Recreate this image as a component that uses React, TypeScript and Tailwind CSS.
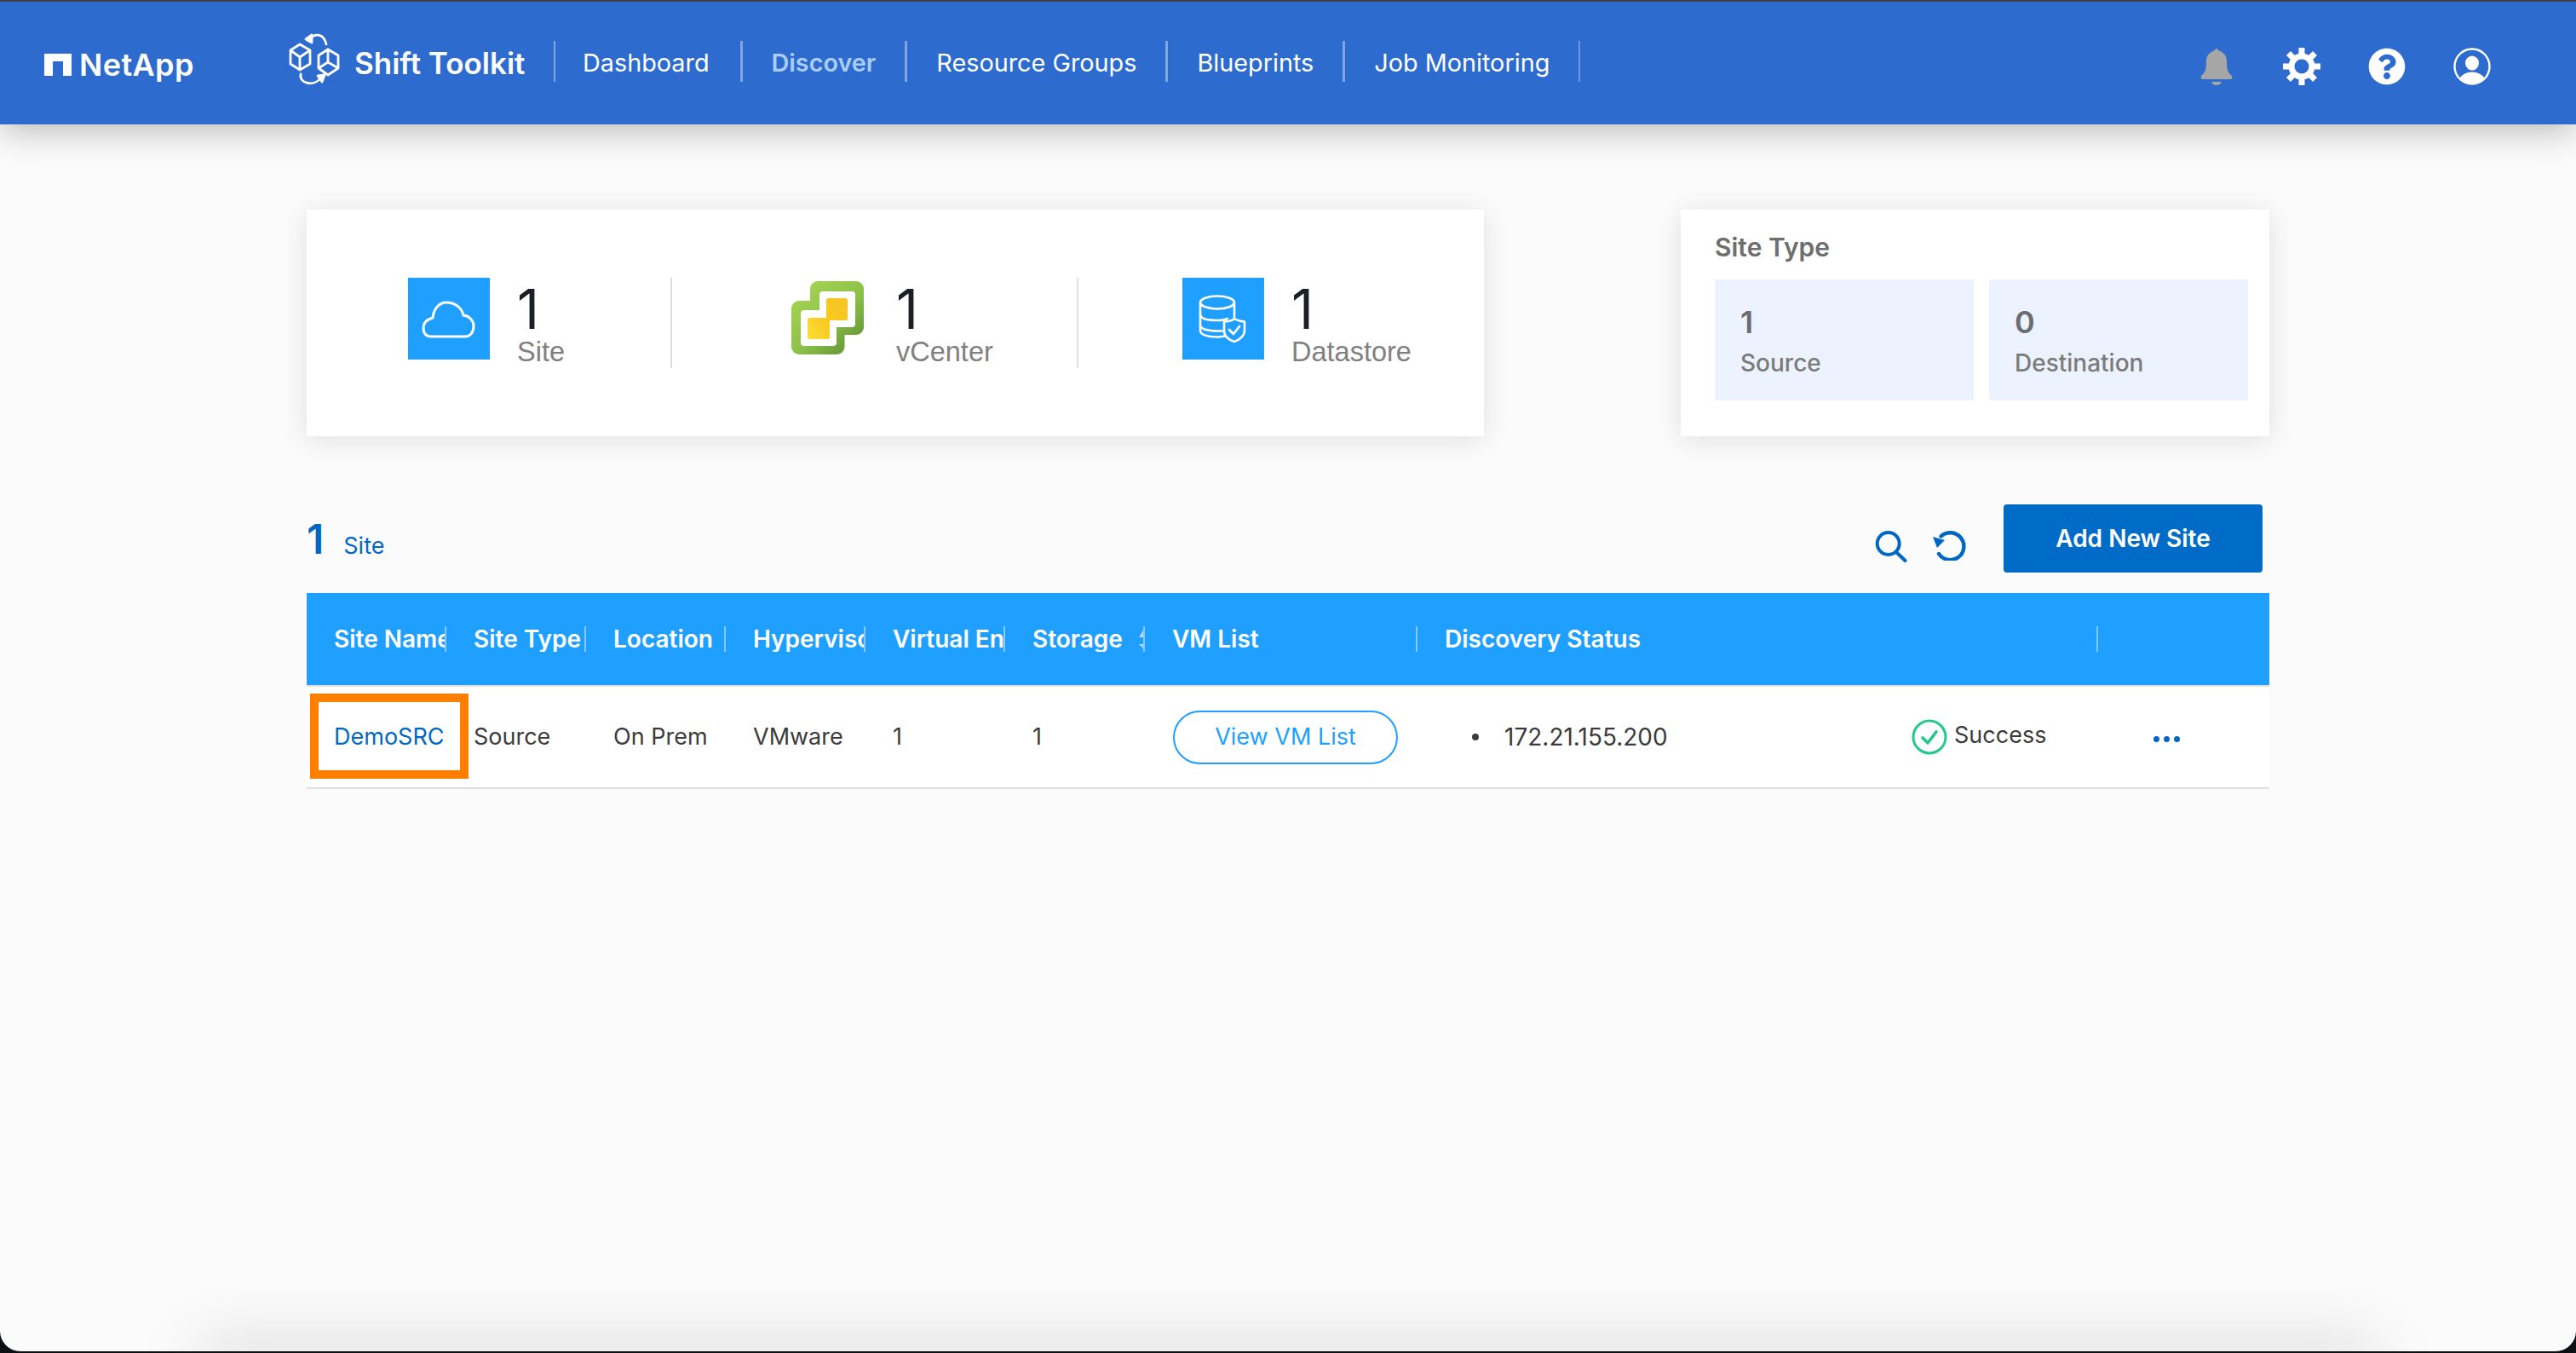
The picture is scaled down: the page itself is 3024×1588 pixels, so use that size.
import { FaQuestionCircle } from 'react-icons/fa';

const navItems = ['Dashboard', 'Discover', 'Resource Groups', 'Blueprints', 'Job Monitoring'];

const columns = [
  { label: 'Site Name', sort: true },
  { label: 'Site Type', sort: true },
  { label: 'Location', sort: true },
  { label: 'Hypervisor', sort: true },
  { label: 'Virtual Environment', sort: true },
  { label: 'Storage', sort: true },
  { label: 'VM List', sort: false },
  { label: 'Discovery Status', sort: false },
  { label: '', sort: false },
];

const gridCols = 'grid grid-cols-[repeat(6,164px)_320px_799px_1fr]';

function ShiftLogo() {
  return (
    <svg viewBox="0 0 80 80" className="mb-1 h-20 w-20 shrink-0" fill="none" stroke="white" strokeWidth="2.8" strokeLinejoin="round" strokeLinecap="round">
      {/* left cube */}
      <path d="M22 22 L11 29 V45 L22 52 L34 45 V29 Z M11 29 L22 37 L34 29 M22 37 V52" />
      {/* right cube */}
      <path d="M55 28 L44 35 V50 L55 58 L67 50 V35 Z M55 28 V43 M44 50 L55 43 L67 50" />
      {/* arrows */}
      <path d="M34 15 C40 9 50 9 53 22" />
      <path d="M29 16 L36 11 L36 20 Z" fill="white" />
      <path d="M23 57 C21 68 38 72 46 62" />
      <path d="M51 58 L43 59 L48 66 Z" fill="white" />
    </svg>
  );
}

function GearIcon() {
  return (
    <svg viewBox="0 0 44 44" className="h-11 w-11" fill="white">
      {[0, 45, 90, 135, 180, 225, 270, 315].map((angle) => (
        <rect key={angle} x="18.5" y="0" width="7" height="10" transform={`rotate(${angle} 22 22)`} />
      ))}
      <circle cx="22" cy="22" r="12" fill="none" stroke="white" strokeWidth="7" />
    </svg>
  );
}

function Header() {
  return (
    <header className="relative z-10 flex h-[144px] shrink-0 items-center bg-[#2d6bcf] pb-1 pl-[52px] pr-[100px] text-white shadow-[0_6px_40px_rgba(0,0,0,0.28)]">
      <div className="mt-2 flex w-[176px] shrink-0 items-center gap-[9px]">
        <svg viewBox="0 0 32 26" className="h-[26px] w-8 shrink-0" fill="white">
          <path d="M0 0 H32 V26 H22 V9 H10 V26 H0 Z" />
        </svg>
        <span className="text-[36px] font-semibold leading-none tracking-[0.4px]">NetApp</span>
      </div>
      <div className="ml-[102px] flex shrink-0 items-center">
        <ShiftLogo />
        <span className="ml-[6px] mt-1 w-[201px] whitespace-nowrap text-[35px] font-semibold leading-none">Shift Toolkit</span>
      </div>
      <nav className="ml-[33px] flex shrink-0 items-center border-l-2 border-white/40">
        {navItems.map((item, i) => (
          <a
            key={item}
            className={`flex h-12 items-center whitespace-nowrap pt-[3px] text-[28.8px] ${
              i === 0 ? 'pl-[32px] pr-[36px]' : 'px-[34px]'
            } ${i === 1 ? 'font-semibold text-[#a9cdf6]' : 'text-white'} ${
              i === navItems.length - 1 ? 'border-r-2 border-white/30' : 'border-r-[3px] border-white/40'
            }`}
          >
            {item}
          </a>
        ))}
      </nav>
      <div className="ml-auto mt-3 flex items-center gap-[56px]">
        <span className="flex h-11 w-11 items-center justify-center">
          <svg viewBox="0 0 38 44" className="h-11 w-[38px]" fill="#a6a6a6">
            <path d="M19 0 C20 2 21 3 23 4 C28 6 31 10 31 16 C31 24 32 29 36 32 C38 34 38 37 35 37 H3 C0 37 0 34 2 32 C6 29 7 24 7 16 C7 10 10 6 15 4 C17 3 18 2 19 0Z" />
            <path d="M13 40 H25 C24 42.5 22 44 19 44 C16 44 14 42.5 13 40Z" />
          </svg>
        </span>
        <GearIcon />
        <FaQuestionCircle className="h-11 w-11" />
        <svg viewBox="0 0 44 44" className="h-11 w-11">
          <defs>
            <clipPath id="userRing">
              <circle cx="22" cy="22" r="20.5" />
            </clipPath>
          </defs>
          <circle cx="22" cy="22" r="20.5" fill="none" stroke="white" strokeWidth="2.4" />
          <ellipse cx="22" cy="18" rx="8" ry="8.6" fill="white" />
          <ellipse cx="22" cy="42" rx="16.5" ry="13.5" fill="white" clipPath="url(#userRing)" />
        </svg>
      </div>
    </header>
  );
}

function CloudIcon() {
  return (
    <svg viewBox="0 0 96 96" className="h-24 w-24" fill="none" stroke="white" strokeWidth="3">
      <path d="M27 69 H67 C73 69 77 64 77 57 C77 50 72 45 65 44 C63 35 55 29 45 29 C36 29 30 37 29 47 C22 49 18 53 18 59 C18 65 21 69 27 69 Z" />
    </svg>
  );
}

function DatastoreIcon() {
  return (
    <svg viewBox="0 0 96 96" className="h-24 w-24" fill="none" stroke="white" strokeWidth="2.6" strokeLinecap="round" strokeLinejoin="round">
      <ellipse cx="41" cy="29" rx="20" ry="7.5" />
      <path d="M21 29 V62 C21 67 30 69.5 41 69.5 C44 69.5 47 69 50 68.5" />
      <path d="M61 29 V46" />
      <path d="M21 43 C21 48 30 50 41 50 C47 50 50 49.5 53 48" />
      <path d="M21 56 C21 60 30 62.5 41 62.5 H49" />
      <path d="M61 48 C65 50.5 69 51.5 73 51.5 V62 C73 68 67 73 61 75 C54 73 49 68 49 62 V51.5 C54 51.5 58 50.5 61 48 Z" fill="#1f9fff" />
      <path d="M55 61 L60 66 L67 57" strokeWidth="2.8" />
    </svg>
  );
}

function VCenterLogo() {
  return (
    <svg viewBox="0 0 85 86" className="h-[86px] w-[85px]">
      <defs>
        <linearGradient id="vcGreen" gradientUnits="userSpaceOnUse" x1="8" y1="4" x2="80" y2="82">
          <stop offset="0" stopColor="#a8d653" />
          <stop offset="0.55" stopColor="#8cc04a" />
          <stop offset="1" stopColor="#5b8f2f" />
        </linearGradient>
        <linearGradient id="vcYellow" gradientUnits="userSpaceOnUse" x1="19" y1="60" x2="66" y2="25">
          <stop offset="0" stopColor="#fbdc34" />
          <stop offset="0.4" stopColor="#f9ca22" />
          <stop offset="1" stopColor="#f8c421" />
        </linearGradient>
      </defs>
      <rect x="22" y="0" width="63" height="63" rx="9" fill="url(#vcGreen)" />
      <rect x="0" y="23" width="62.5" height="63" rx="9" fill="url(#vcGreen)" />
      <rect x="33" y="12" width="42" height="42" rx="4" fill="white" />
      <rect x="11" y="34" width="42" height="42" rx="4" fill="white" />
      <rect x="41" y="20" width="25" height="26" rx="2.5" fill="url(#vcYellow)" />
      <rect x="19" y="43" width="26" height="25" rx="2.5" fill="url(#vcYellow)" />
      <rect x="41" y="43" width="4" height="3" fill="#f9ca22" />
    </svg>
  );
}

function Stat({ value, label }: { value: number; label: string }) {
  return (
    <div>
      <div className="text-[64px] leading-[73px] text-[#1c1f24]">{value}</div>
      <div className="font-['Liberation_Sans',sans-serif] text-[32.5px] leading-[29px] text-[#808080]">{label}</div>
    </div>
  );
}

function SummaryCards() {
  return (
    <div className="mt-[100px] flex h-[266px] justify-between">
      <div className="flex w-[1382px] bg-white pt-20 shadow-[0_4px_30px_rgba(0,0,0,0.11)]">
        <div className="flex h-[106px] w-[429px] gap-8 border-r-2 border-[#dcdcdf] pl-[119px]">
          <div className="h-24 w-24 bg-[#1f9fff]">
            <CloudIcon />
          </div>
          <Stat value={1} label="Site" />
        </div>
        <div className="flex h-[106px] w-[477px] border-r-2 border-[#e2e2e2] pl-[140px] pt-1">
          <VCenterLogo />
          <div className="-mt-1 ml-[38px]">
            <Stat value={1} label="vCenter" />
          </div>
        </div>
        <div className="flex flex-1 gap-8 pl-[122px]">
          <div className="h-24 w-24 bg-[#1f9fff]">
            <DatastoreIcon />
          </div>
          <Stat value={1} label="Datastore" />
        </div>
      </div>

      <div className="w-[691px] bg-white pl-10 pr-[25px] pt-6 shadow-[0_4px_30px_rgba(0,0,0,0.11)]">
        <div className="mb-[18px] text-[30px] font-semibold leading-10 text-[#6e6e6e]">Site Type</div>
        <div className="flex gap-[18px]">
          {[
            { value: 1, label: 'Source' },
            { value: 0, label: 'Destination' },
          ].map(({ value, label }) => (
            <div key={label} className="h-[142px] w-[304px] bg-[#ecf3fe] pl-[30px] pt-7">
              <div className="text-[36px] font-semibold leading-11 text-[#6c6d71]">{value}</div>
              <div className="mt-[6px] text-[28px] font-medium leading-10 text-[#7b7b7b]">{label}</div>
            </div>
          ))}
        </div>
      </div>
    </div>
  );
}

function Toolbar() {
  return (
    <div className="mt-20 flex h-20 items-center justify-between pr-2">
      <div className="flex items-baseline gap-[23px] pt-[2px] text-[#0067c5]">
        <span className="text-[48px] font-semibold leading-[80px]">1</span>
        <span className="text-[27px]">Site</span>
      </div>
      <div className="flex items-center">
        <div className="mt-3 flex items-center gap-7 text-[#0067c5]">
          <svg viewBox="0 0 44 44" className="h-11 w-11" fill="none" stroke="currentColor" strokeWidth="4" strokeLinecap="round">
            <circle cx="20.7" cy="22" r="13" />
            <path d="M30 32 L40.5 42" />
          </svg>
          <svg viewBox="0 0 40 40" className="h-10 w-10" fill="none" stroke="currentColor" strokeWidth="4.4" strokeLinecap="round">
            <path d="M8 32 A16 16 0 1 0 10.5 11.5" />
            <path d="M1 12 L15 16 L6 25 Z" fill="currentColor" stroke="none" />
          </svg>
        </div>
        <button className="ml-11 h-20 w-[304px] rounded bg-[#006cc8] text-[28px] font-semibold text-white">Add New Site</button>
      </div>
    </div>
  );
}

function SortArrows() {
  return (
    <svg viewBox="0 0 12 24" className="ml-[19px] h-6 w-3 shrink-0" fill="white" fillOpacity="0.65">
      <path d="M6 0 L12 10 H0 Z" />
      <path d="M0 18 H12 L6 24 Z" />
    </svg>
  );
}

function SiteTable() {
  return (
    <div className="relative mt-6">
      <div className={`${gridCols} h-[108px] items-center bg-[#1f9fff] text-[28px] font-semibold text-white`}>
        {columns.map((col, i) => (
          <div
            key={col.label || i}
            className={`flex h-[30px] items-center overflow-hidden whitespace-nowrap pl-8 ${i < 8 ? 'border-r-2 border-white/45' : ''}`}
          >
            <span className="shrink-0">{col.label}</span>
            {col.sort && <SortArrows />}
          </div>
        ))}
      </div>
      <div className={`${gridCols} h-[122px] items-center border-y-2 border-[#e0e0e0] bg-white text-[27px] text-[#3b3b3b]`}>
        <a className="pl-8 text-[#0067c5]">DemoSRC</a>
        <div className="pl-8">Source</div>
        <div className="pl-8">On Prem</div>
        <div className="pl-8">VMware</div>
        <div className="pl-8">1</div>
        <div className="pl-8">1</div>
        <div className="pl-[33px]">
          <button className="h-[63px] w-[264px] rounded-full border-2 border-[#1f9fff] text-[27px] text-[#1f9fff]">View VM List</button>
        </div>
        <div className="grid grid-cols-[580px_1fr] items-center">
          <div className="flex items-center gap-[30px] pl-16">
            <span className="h-2 w-2 rounded-full bg-[#3b3b3b]" />
            <span className="text-[28px]">172.21.155.200</span>
          </div>
          <div className="flex items-center gap-2">
            <svg viewBox="0 0 42 42" className="h-[42px] w-[42px]" fill="none" stroke="#22c98c" strokeWidth="3">
              <circle cx="21" cy="21" r="19" />
              <path d="M13 22 L19 28 L29 15" strokeWidth="3.6" strokeLinecap="round" strokeLinejoin="round" />
            </svg>
            <span className="-mt-1">Success</span>
          </div>
        </div>
        <div className="mt-[5px] flex gap-[5px] pl-[65px]">
          <span className="h-[7px] w-[7px] rounded-full bg-[#0067c5]" />
          <span className="h-[7px] w-[7px] rounded-full bg-[#0067c5]" />
          <span className="h-[7px] w-[7px] rounded-full bg-[#0067c5]" />
        </div>
      </div>
      {/* orange highlight around the site name */}
      <div className="absolute left-1 top-[118px] h-[100px] w-[186px] border-[10px] border-[#ff7f00]" />
    </div>
  );
}

export default function App() {
  return (
    <div className="h-[1588px] w-[3024px] overflow-hidden border-t-2 border-[#3e4044] bg-[#0d0f12] font-[Inter,sans-serif]">
      <div className="relative flex h-[1584px] flex-col overflow-hidden rounded-b-3xl bg-[#fbfbfb]">
        <Header />
        <main className="px-[360px]">
          <SummaryCards />
          <Toolbar />
          <SiteTable />
        </main>
        {/* window shadow along the bottom edge */}
        <div className="absolute inset-x-[232px] -bottom-5 h-5 shadow-[0_-6px_70px_rgba(0,0,0,0.26)]" />
      </div>
    </div>
  );
}
